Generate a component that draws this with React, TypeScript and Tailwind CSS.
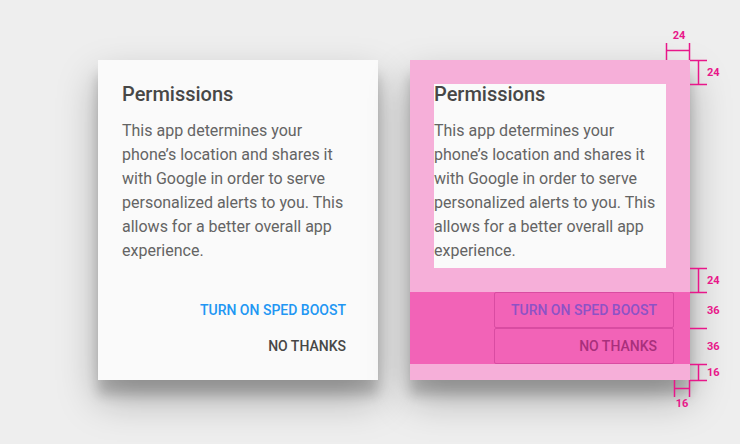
import React from 'react';

const bodyLines = [
  'This app determines your',
  'phone’s location and shares it',
  'with Google in order to serve',
  'personalized alerts to you. This',
  'allows for a better overall app',
  'experience.',
];

const Content: React.FC<{ boxed?: boolean }> = ({ boxed }) => (
  <div className={`pb-[5px] ${boxed ? 'bg-[#fafafa]' : ''}`}>
    <h2 className="text-[20px] leading-[20px] font-medium text-[#474747]">Permissions</h2>
    <p className="mt-[15px] text-[16px] leading-[24px] text-[#646464]">
      {bodyLines.map((l) => (
        <span key={l} className="block whitespace-nowrap">{l}</span>
      ))}
    </p>
  </div>
);

const Dialog: React.FC<{ annotated?: boolean }> = ({ annotated }) => (
  <div
    className={`w-[280px] h-[320px] flex flex-col shadow-[0_19px_38px_rgba(0,0,0,0.28),0_15px_12px_rgba(0,0,0,0.2)] ${
      annotated ? 'bg-[#f6afd9]' : 'bg-[#fafafa]'
    }`}
  >
    <div className="p-6">
      <Content boxed={annotated} />
    </div>
    <div className={`flex justify-end pr-4 ${annotated ? 'bg-[#f263b7]' : ''}`}>
      <div className="flex flex-col">
        <button
          className={`h-9 px-4 text-right text-[14px] font-medium ${
            annotated ? 'border border-[#d94ca2] rounded-[2px] text-[#8d52c6]' : 'text-[#2196f3]'
          }`}
        >
          TURN ON SPED BOOST
        </button>
        <button
          className={`h-9 px-4 text-right text-[14px] font-medium ${
            annotated ? 'border border-[#d94ca2] rounded-[2px] text-[#a8307c]' : 'text-[#474747]'
          }`}
        >
          NO THANKS
        </button>
      </div>
    </div>
  </div>
);

const Label: React.FC<{ x: number; y: number; t: string; center?: boolean }> = ({ x, y, t, center }) => (
  <span
    className={`absolute text-[11px] leading-[12px] font-bold text-[#e8178a] ${center ? '-translate-x-1/2' : ''}`}
    style={{ left: x, top: y - 6 }}
  >
    {t}
  </span>
);

const Annotations: React.FC = () => {
  const c = '#e8178a';
  const ticks = [60, 84, 268, 292, 328, 364, 380];
  return (
    <>
      <svg className="absolute inset-0 pointer-events-none" width="740" height="444">
        <g stroke={c} strokeWidth="1.5" fill="none">
          <line x1="666.5" y1="43" x2="666.5" y2="60" />
          <line x1="689.5" y1="43" x2="689.5" y2="60" />
          <line x1="666" y1="50.5" x2="690" y2="50.5" />
          {ticks.map((y) => (
            <line key={y} x1="690" y1={y + 0.5} x2="707" y2={y + 0.5} />
          ))}
          <line x1="698.5" y1="60" x2="698.5" y2="84" />
          <line x1="698.5" y1="268" x2="698.5" y2="292" />
          <line x1="698.5" y1="364" x2="698.5" y2="380" />
          <line x1="674.5" y1="380" x2="674.5" y2="397" />
          <line x1="689.5" y1="380" x2="689.5" y2="397" />
          <line x1="674" y1="388.5" x2="690" y2="388.5" />
        </g>
      </svg>
      <Label x={679} y={36} t="24" center />
      <Label x={707} y={73} t="24" />
      <Label x={707} y={281} t="24" />
      <Label x={707} y={311} t="36" />
      <Label x={707} y={347} t="36" />
      <Label x={707} y={373} t="16" />
      <Label x={682} y={404} t="16" center />
    </>
  );
};

export default function App() {
  return (
    <div
      className="relative w-[740px] h-[444px] overflow-hidden bg-[#eeeeee]"
      style={{ fontFamily: 'Roboto, "Liberation Sans", sans-serif' }}
    >
      <div className="flex gap-8 pl-[98px] pt-[60px]">
        <Dialog />
        <Dialog annotated />
      </div>
      <Annotations />
    </div>
  );
}
